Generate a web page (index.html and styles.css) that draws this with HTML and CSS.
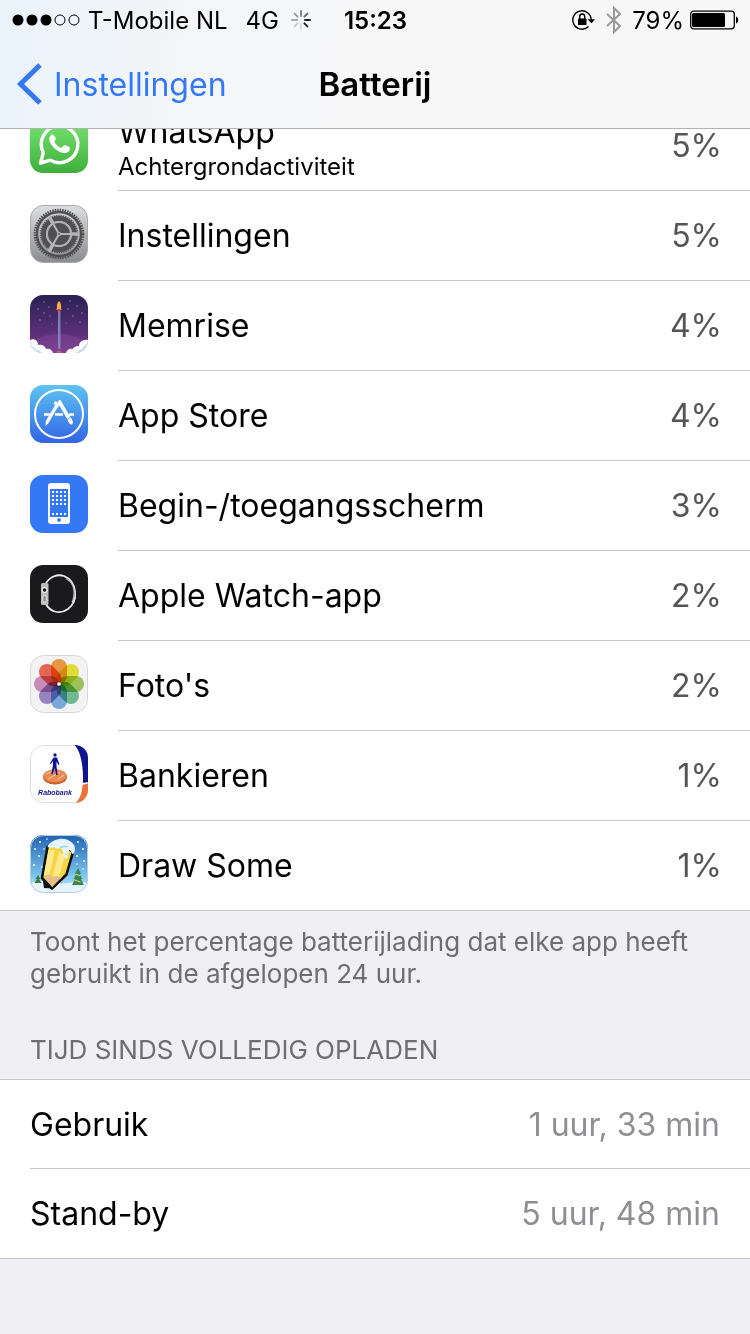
FILE: index.html
```html
<!DOCTYPE html>
<html lang="nl">
<head>
    <meta charset="UTF-8">
    <meta name="viewport" content="width=device-width, initial-scale=1.0">
    <title>Batterij</title>
    <link rel="stylesheet" href="styles.css">
</head>
<body>
    <header class="topbar">
        <div class="statusbar">
            <div class="status-left">
                <svg class="signal" width="68" height="12" viewBox="0 0 68 12">
                    <circle cx="6" cy="6" r="5.5"/>
                    <circle cx="20" cy="6" r="5.5"/>
                    <circle cx="34" cy="6" r="5.5"/>
                    <g fill="none" stroke="#000"><circle cx="48" cy="6" r="5"/><circle cx="62" cy="6" r="5"/></g>
                </svg>
                <span class="carrier">T-Mobile NL</span>
                <span class="network">4G</span>
                <svg width="20" height="20" viewBox="0 0 20 20" fill="none" stroke-width="2" stroke-linecap="round">
                    <path d="M10 1v5" stroke="#888"/>
                    <path d="M16.4 3.6l-3 3" stroke="#666"/>
                    <path d="M14 10h5" stroke="#222"/>
                    <path d="M13.4 13.4l3 3" stroke="#222"/>
                    <path d="M10 14v5" stroke="#ddd"/>
                    <path d="M6.6 13.4l-3 3" stroke="#ccc"/>
                    <path d="M1 10h5" stroke="#aaa"/>
                    <path d="M3.6 3.6l3 3" stroke="#999"/>
                </svg>
            </div>
            <span class="clock">15:23</span>
            <div class="status-right">
                <svg width="24" height="22" viewBox="0 0 24 22">
                    <path d="M16.5 17.5A9.200 9.200 0 1 1 19.200 11" fill="none" stroke="#000" stroke-width="1.4"/>
                    <path d="M15.500 10.300h7.500l-3.500 4z"/>
                    <rect x="6" y="9.5" width="8.5" height="6.5" rx=".8"/>
                    <path d="M7.700 10V7.500a2.500 2.500 0 0 1 5 0V10" fill="none" stroke="#000" stroke-width="1.4"/>
                </svg>
                <svg class="bluetooth" width="16" height="28" viewBox="0 0 16 28" fill="none" stroke="#999" stroke-width="2">
                    <path d="M1 8l13 12-6 6V2l6 6L1 20"/>
                </svg>
                <span>79%</span>
                <svg width="49" height="20" viewBox="0 0 49 20">
                    <rect x=".7" y="1.2" width="43.600" height="17.600" rx="3" fill="none" stroke="#000" stroke-width="1.3"/>
                    <rect x="2" y="3" width="33" height="14" rx="1.5"/>
                    <path d="M46 6.500c3 1 3 6 0 7z"/>
                </svg>
            </div>
        </div>
        <nav class="navbar">
            <a class="back" href="#">
                <svg width="26" height="42" viewBox="0 0 26 42" fill="none" stroke="#3478f6" stroke-width="5">
                    <path d="M24 2L4.500 21 24 40"/>
                </svg>
                Instellingen
            </a>
            <h1>Batterij</h1>
        </nav>
    </header>

    <main>
        <ul class="list apps">
            <li class="row">
                <svg class="icon" viewBox="0 0 58 58">
                    <defs><linearGradient id="wa" x2="0" y2="1"><stop offset="0" stop-color="#7bea76"/><stop offset="1" stop-color="#3fae3c"/></linearGradient></defs>
                    <rect width="58" height="58" rx="13" fill="url(#wa)"/>
                    <path d="M10.500 48l2.800-10.300A18.300 18.300 0 1 1 20.500 45.200z" fill="none" stroke="#fff" stroke-width="3.4" stroke-linejoin="round"/>
                    <path d="M23 19.500c-1.500-.3-4 1.800-3.700 5.200.4 4.800 7.800 12.500 14.200 13.300 3.500.4 6.400-1.600 6.500-4.500 0-1-.3-1.300-5.200-3.500-1.200-.5-1.800 2.200-3.400 2.800-2 .2-6.900-4.500-7-6.300.1-1.200 1.900-2 1.600-3.300z" fill="#fff"/>
                </svg>
                <div class="cell">
                    <div class="label">
                        <span class="name">WhatsApp</span>
                        <span class="detail">Achtergrondactiviteit</span>
                    </div>
                    <span class="value">5%</span>
                </div>
            </li>
            <li class="row">
                <svg class="icon" viewBox="0 0 58 58">
                    <defs><linearGradient id="set" x2="0" y2="1"><stop offset="0" stop-color="#dcdde0"/><stop offset="1" stop-color="#8b8c90"/></linearGradient></defs>
                    <rect x=".5" y=".5" width="57" height="57" rx="13" fill="url(#set)" stroke="#aaa"/>
                    <g fill="none" stroke="#505053">
                        <circle cx="29" cy="29" r="24" stroke-width="2.6" stroke-dasharray="1.500 1.013"/>
                        <circle cx="29" cy="29" r="22" stroke-width="2.4"/>
                        <circle cx="29" cy="29" r="15.5" stroke-width="5"/>
                        <circle cx="29" cy="29" r="18.4" stroke-width="1.5" stroke-dasharray="1.300 1.010"/>
                    </g>
                    <path d="M29 29h20M29 29l-10-17.300M29 29l-10 17.300" stroke="#b4b5b8" stroke-width="3.6"/>
                    <circle cx="29" cy="29" r="12" fill="#505053" stroke="#b0b1b4" stroke-width="2"/>
                    <path d="M29 29h12M29 29l-6-10.400M29 29l-6 10.400" stroke="#b4b5b8" stroke-width="2"/>
                    <circle cx="29" cy="29" r="2.2" fill="#b4b5b8"/><circle cx="29" cy="29" r="1" fill="#555"/>
                </svg>
                <div class="cell"><span class="name">Instellingen</span><span class="value">5%</span></div>
            </li>
            <li class="row">
                <svg class="icon" viewBox="0 0 58 58">
                    <defs>
                        <linearGradient id="mem" x2="0" y2="1"><stop offset="0" stop-color="#2a2153"/><stop offset=".65" stop-color="#5a2f78"/><stop offset="1" stop-color="#78408e"/></linearGradient>
                        <clipPath id="round"><rect width="58" height="58" rx="13"/></clipPath>
                    </defs>
                    <g clip-path="url(#round)">
                        <rect width="58" height="58" fill="url(#mem)"/>
                        <ellipse cx="29" cy="56" rx="30" ry="17" fill="#86489a" opacity=".4"/>
                        <path d="M28 16h2.400l.2 38h-2.800z" fill="#8b8fc4" opacity=".8"/>
                        <path d="M29 6c2 2 2.400 4 2 7l.6 2h-5.200l.6-2c-.4-3 0-5 2-7z" fill="#f0b04c"/>
                        <path d="M27.500 14h3v2.500h-3z" fill="#d5453c"/>
                        <g fill="#8b84c4">
                            <circle cx="8" cy="14" r=".8"/><circle cx="14" cy="7" r=".7"/><circle cx="19" cy="12" r=".7"/><circle cx="10" cy="25" r=".8"/><circle cx="20" cy="21" r=".7"/><circle cx="14" cy="18" r=".8"/><circle cx="40" cy="6" r=".8"/><circle cx="47" cy="11" r=".7"/><circle cx="38" cy="14" r=".8"/><circle cx="43" cy="21" r=".8"/><circle cx="50" cy="27" r=".7"/><circle cx="36" cy="28" r=".6"/><circle cx="22" cy="29" r=".6"/><circle cx="52" cy="18" r=".8"/>
                        </g>
                        <path d="M0 45c4-2 8 0 8 5 4-1 7 1 8 4 4-1 6 1 7 4H0zM58 45c-6-1-9 3-9 6-4 0-6 2-6 3-4-1-6 1-7 4h22z" fill="#fff"/>
                        <path d="M0 53c3-2 6 0 6 2 3 0 5 1 6 3H0zM58 49c-4 0-5 3-5 5-3 0-5 2-5 4h10z" fill="#c3e0ee"/>
                        <circle cx="29" cy="58" r="2.6" fill="#c75790"/>
                    </g>
                </svg>
                <div class="cell"><span class="name">Memrise</span><span class="value">4%</span></div>
            </li>
            <li class="row">
                <svg class="icon" viewBox="0 0 58 58">
                    <defs><linearGradient id="store" x2="0" y2="1"><stop offset="0" stop-color="#5fc3f3"/><stop offset="1" stop-color="#3264e3"/></linearGradient></defs>
                    <rect width="58" height="58" rx="13" fill="url(#store)"/>
                    <circle cx="29" cy="29" r="24" fill="none" stroke="#fff" stroke-width="2"/>
                    <g stroke="#fff" stroke-width="2.6" fill="none">
                        <path d="M14 29.500h7M25 29.500h8M39 29.500h5"/>
                        <path d="M25.500 18l2 2.500M26.500 21L17.500 36.500" stroke-width="3.4" stroke-linecap="round"/>
                        <path d="M29.500 17L39 33.500" stroke-width="3.6" stroke-linecap="round"/>
                    </g>
                    <path d="M15.800 35.500l3.400 2-3.700 3.500zM37.600 35.500l4-2.300 1.400 4-.8 2.300-2.500-.6z" fill="#fff"/>
                    <path d="M36.800 34.300l3.800-2.200" stroke="#4a8be9" stroke-width=".8"/>
                </svg>
                <div class="cell"><span class="name">App Store</span><span class="value">4%</span></div>
            </li>
            <li class="row">
                <svg class="icon" viewBox="0 0 58 58">
                    <rect width="58" height="58" rx="13" fill="#3478f6"/>
                    <rect x="18" y="8" width="22" height="41" rx="3" fill="#fff"/>
                    <rect x="20" y="14" width="18" height="28" fill="#3478f6"/>
                    <path d="M22 17h14M22 21h14M22 25h14M22 29h14M22 39h14" stroke="#fff" stroke-width="2" stroke-dasharray="2 2"/>
                    <circle cx="29" cy="45" r="1.9" fill="#3478f6"/>
                </svg>
                <div class="cell"><span class="name">Begin-/toegangsscherm</span><span class="value">3%</span></div>
            </li>
            <li class="row">
                <svg class="icon" viewBox="0 0 58 58">
                    <rect width="58" height="58" rx="13" fill="#1a1a1c"/>
                    <path d="M15.500 19C20 11 28 9 34 11c13 5 15 25 4 33-8 6-18 3-22-5" fill="none" stroke="#eee" stroke-width="1.8"/>
                    <path d="M36 13.500c7 4 9.500 12 7 21.500" fill="none" stroke="#aaa" stroke-width="1.4"/>
                    <path d="M42 37l3.500-4" stroke="#ddd" stroke-width="1.5"/>
                    <rect x="11" y="18" width="7.5" height="22" rx="1.5" fill="#bbb"/>
                    <circle cx="14.500" cy="25" r="3" fill="#eee"/><circle cx="14.500" cy="25" r="1.8" fill="#111"/>
                    <rect x="12.800" y="30.500" width="3.5" height="6.5" rx="1.5" fill="#888" stroke="#eee"/>
                </svg>
                <div class="cell"><span class="name">Apple Watch-app</span><span class="value">2%</span></div>
            </li>
            <li class="row">
                <svg class="icon" viewBox="0 0 58 58">
                    <rect x=".5" y=".5" width="57" height="57" rx="13" fill="#f3f3f3" stroke="#d8d8d8"/>
                    <g class="petals">
                        <rect x="21" y="4" width="16" height="25" rx="8" fill="#f3a044"/>
                        <rect x="21" y="4" width="16" height="25" rx="8" fill="#ece63c" transform="rotate(45 29 29)"/>
                        <rect x="21" y="4" width="16" height="25" rx="8" fill="#a3cc5c" transform="rotate(90 29 29)"/>
                        <rect x="21" y="4" width="16" height="25" rx="8" fill="#78c29a" transform="rotate(135 29 29)"/>
                        <rect x="21" y="4" width="16" height="25" rx="8" fill="#7fb0e6" transform="rotate(180 29 29)"/>
                        <rect x="21" y="4" width="16" height="25" rx="8" fill="#9f8bc8" transform="rotate(225 29 29)"/>
                        <rect x="21" y="4" width="16" height="25" rx="8" fill="#d095bf" transform="rotate(270 29 29)"/>
                        <rect x="21" y="4" width="16" height="25" rx="8" fill="#f06c58" transform="rotate(315 29 29)"/>
                    </g>
                    <circle cx="29" cy="29" r="1.8" fill="#fff"/>
                </svg>
                <div class="cell"><span class="name">Foto's</span><span class="value">2%</span></div>
            </li>
            <li class="row">
                <svg class="icon" viewBox="0 0 58 58">
                    <g clip-path="url(#round)">
                        <rect width="58" height="58" fill="#fff"/>
                        <rect x=".5" y=".5" width="57" height="57" rx="13" fill="none" stroke="#ddd"/>
                        <path d="M44.500 0c5 5 9 17 8.500 38l5-1V0z" fill="#10128f"/>
                        <path d="M52.500 40l5.500-1.500V58H46c4-5 6-10 6.500-18z" fill="#e9733a"/>
                    </g>
                    <ellipse cx="25" cy="32" rx="12" ry="7.5" fill="#c9612c"/>
                    <ellipse cx="25" cy="30.800" rx="11.5" ry="6.5" fill="#e88a4e"/>
                    <path d="M16 29l7-3M18 34l12-7M28 34l6-4" stroke="#f7c39c" stroke-width="1.2"/>
                    <circle cx="25" cy="10" r="1.7" fill="#10128f"/>
                    <path d="M23.500 12.500h3.500l2.500 7-1 .5-2-3.500v4.500l1.200 9h-1.600l-1.400-7-2 6h-1.400l1.600-8.500v-4.500l-2 3-1-.5z" fill="#10128f"/>
                    <text x="25" y="50" class="rabo">Rabobank</text>
                </svg>
                <div class="cell"><span class="name">Bankieren</span><span class="value">1%</span></div>
            </li>
            <li class="row">
                <svg class="icon" viewBox="0 0 58 58">
                    <defs><linearGradient id="sky" x2="0" y2="1"><stop offset="0" stop-color="#1e62b4"/><stop offset=".7" stop-color="#7cc5ec"/><stop offset="1" stop-color="#d6effa"/></linearGradient></defs>
                    <g clip-path="url(#round)">
                        <rect width="58" height="58" fill="url(#sky)"/>
                        <path d="M0 48c10-4 20-2 28 0s20-3 30 0v10H0z" fill="#e6f3fb"/>
                        <g fill="#fff">
                            <circle cx="5" cy="14" r="1"/><circle cx="10" cy="7" r="1"/><circle cx="9" cy="21" r=".9"/><circle cx="4" cy="30" r="1"/><circle cx="12" cy="32" r=".9"/><circle cx="17" cy="4" r=".8"/><circle cx="48" cy="7" r="1"/><circle cx="53" cy="14" r="1"/><circle cx="47" cy="21" r="1"/><circle cx="54" cy="26" r=".9"/><circle cx="47" cy="29" r=".8"/><circle cx="14" cy="14" r=".8"/><circle cx="53" cy="34" r=".8"/>
                        </g>
                        <rect x=".5" y=".5" width="57" height="57" rx="13" fill="none" stroke="#b9cfdd"/>
                    </g>
                    <path d="M8 40l2.500 4H9l2.500 4H4.500L7 44H5.500z" fill="#39794b"/>
                    <path d="M48 33l3 6h-1.500l3 5h-1.500l3 6H42l3-6h-1.500l3-5H45z" fill="#3c8551"/>
                    <path d="M46 39l4 2M44.500 45l6 2" stroke="#f2da68"/>
                    <path d="M17.500 12L12 43l10 10.500 14.500-14L43 17 28 6z" fill="#f5d548" stroke="#111" stroke-width="2.6" stroke-linejoin="round"/>
                    <path d="M18.500 15l-4.500 25 5 1 6-26zM29 17l-6 24 6 1 6-22z" fill="#ffe98a"/>
                    <path d="M14 41l5-2 4 3 5-1 2 2 4-3-8 8-4 4.500z" fill="#e6bf8b"/>
                    <path d="M12.500 43.500l1.500 9.500 9 .5-4-5z" fill="#111"/>
                    <path d="M17.500 12c1-4 6-7 12-8 7-1 13 3 15 7 1 4 0 8-1.500 8s-2-4-3.500-4-1 8-3.500 8.500-2.500-7-4-9.500-5 1-6.500-1-5 1-8-1z" fill="#e6f5fd"/>
                    <path d="M30 12c3 1 5-2 8 0" stroke="#a6d3ee" stroke-width="1.5" fill="none"/>
                </svg>
                <div class="cell"><span class="name">Draw Some</span><span class="value">1%</span></div>
            </li>
        </ul>

        <p class="note">Toont het percentage batterijlading dat elke app heeft gebruikt in de afgelopen 24 uur.</p>

        <h2>Tijd sinds volledig opladen</h2>
        <ul class="list usage">
            <li class="row">
                <div class="cell"><span class="name">Gebruik</span><span class="value">1 uur, 33 min</span></div>
            </li>
            <li class="row">
                <div class="cell"><span class="name">Stand-by</span><span class="value">5 uur, 48 min</span></div>
            </li>
        </ul>
    </main>
</body>
</html>
```
FILE: styles.css
```css
* {
    box-sizing: border-box;
}
body {
    margin: 0;
    font-family: Inter, "Liberation Sans", sans-serif;
    font-size: 32px;
    color: #000;
    background-color: #efeff4;
}
.topbar {
    position: sticky;
    top: 0;
    z-index: 1;
    background: linear-gradient(100deg, #eaf3fb 0, #f4f6f8 25%, #f7f7f8 50%);
    border-bottom: 1px solid #b2b2b2;
}
.statusbar {
    display: grid;
    grid-template-columns: 1fr auto 1fr;
    align-items: center;
    height: 40px;
    padding: 0 11px 0 12px;
    font-size: 24px;
}
.status-left,
.status-right {
    display: flex;
    align-items: center;
}
.carrier {
    margin-left: 8px;
}
.network {
    margin: 0 12px 0 18px;
}
.clock {
    font-weight: 600;
}
.status-right {
    justify-content: flex-end;
    gap: 6px;
}
.bluetooth {
    margin: 0 4px;
}
.navbar {
    display: grid;
    grid-template-columns: 1fr auto 1fr;
    align-items: center;
    height: 88px;
    padding: 0 16px;
}
.back {
    display: flex;
    align-items: center;
    gap: 12px;
    color: #3478f6;
    text-decoration: none;
}
h1 {
    margin: 0;
    font-size: 33px;
    font-weight: 600;
}
.list {
    margin: 0;
    padding: 0;
    list-style: none;
    background-color: #fff;
    border-bottom: 1px solid #c8c7cc;
}
/* first row is scrolled partly under the top bar */
.apps {
    margin-top: -28px;
}
.row {
    display: flex;
    padding-left: 30px;
}
.icon {
    flex: none;
    width: 58px;
    height: 58px;
    margin: 14px 30px 0 0;
}
.cell {
    flex: 1;
    display: flex;
    justify-content: space-between;
    align-items: center;
    height: 90px;
    padding-right: 30px;
    border-bottom: 1px solid #c8c7cc;
}
.apps .cell {
    padding-right: 28px;
}
.row:last-child .cell {
    height: 89px;
    border-bottom: none;
}
.label {
    display: flex;
    flex-direction: column;
    padding-top: 4px;
}
.label .name {
    line-height: 38px;
}
.detail {
    font-size: 24px;
    line-height: 32px;
}
.value {
    color: #555;
}
.usage .value {
    color: #8e8e93;
}
.petals rect {
    mix-blend-mode: multiply;
}
.rabo {
    font: italic bold 7px "Liberation Sans", sans-serif;
    text-anchor: middle;
    fill: #10128f;
}
.note {
    margin: 0;
    padding: 15px 30px 0;
    font-size: 26px;
    line-height: 32px;
    color: #6d6d72;
}
h2 {
    margin: 0;
    padding: 44px 30px 13px;
    font-size: 26px;
    font-weight: 400;
    line-height: 32px;
    text-transform: uppercase;
    color: #6d6d72;
}
.usage {
    border-top: 1px solid #c8c7cc;
}
.usage .cell {
    height: 89px;
}
```
